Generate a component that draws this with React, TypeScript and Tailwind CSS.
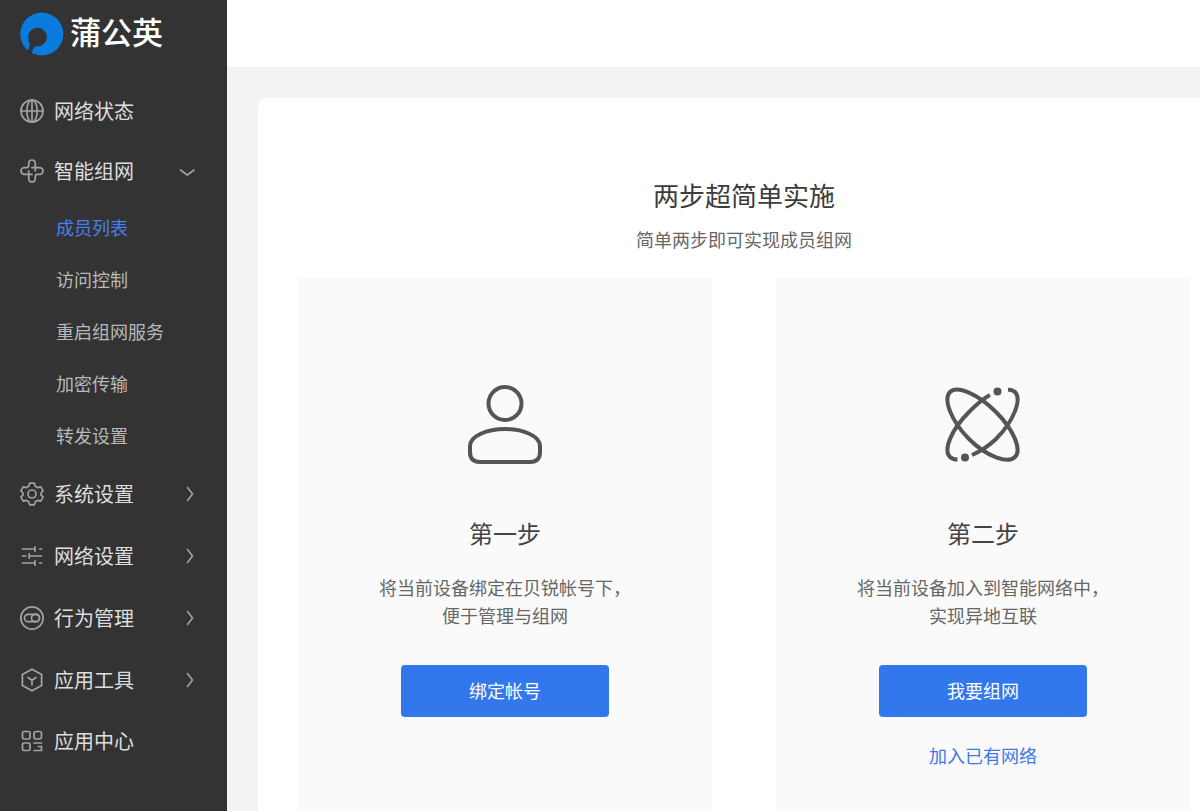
import type { ReactNode } from "react";

type IconProps = { children: ReactNode };

function MenuGlyph({ children }: IconProps) {
  return (
    <svg
      viewBox="0 0 24 24"
      className="size-6 shrink-0 text-[#a3a3a3]"
      fill="none"
      stroke="currentColor"
      strokeWidth="1.7"
      strokeLinecap="round"
      strokeLinejoin="round"
      aria-hidden="true"
    >
      {children}
    </svg>
  );
}

const globe = (
  <MenuGlyph>
    <circle cx="12" cy="12" r="11" />
    <ellipse cx="12" cy="12" rx="5.2" ry="11" />
    <path d="M1 12h22M12 1v22" />
  </MenuGlyph>
);

const mesh = (
  <MenuGlyph>
    <path d="M15.300 12V4.300a3.300 3.300 0 0 0-6.600 0V6.500q0 2.200-2.200 2.200H4.300a3.300 3.300 0 0 0 0 6.600H12" />
    <path d="M8.700 12v7.700a3.300 3.300 0 0 0 6.600 0V17.500q0-2.200 2.200-2.200h2.200a3.300 3.300 0 0 0 0-6.600H12" />
  </MenuGlyph>
);

const gear = (
  <MenuGlyph>
    <path d="M9.700 1.200h4.600l1 3.100 2.300 1.300 3.200-.7 2.300 4-2.200 2.400v1.400l2.200 2.400-2.300 4-3.200-.7-2.300 1.300-1 3.100H9.700l-1-3.100-2.300-1.300-3.200.7-2.300-4 2.200-2.400v-1.400L.9 8.900l2.300-4 3.200.7 2.300-1.300z" />
    <circle cx="12" cy="12" r="4" />
  </MenuGlyph>
);

const sliders = (
  <MenuGlyph>
    <path d="M2.500 5h12M15 2.800v4.400M19.800 5h1.700M2.500 12h3.200M9.500 12h12M9.200 9.800v4.400M2.500 19h12M15 16.800v4.400M19.800 19h1.700" />
  </MenuGlyph>
);

const toggle = (
  <MenuGlyph>
    <circle cx="12" cy="12" r="11.200" />
    <rect x="4.500" y="8.300" width="15" height="7.400" rx="3.700" />
    <rect x="11.500" y="8.300" width="8" height="7.400" rx="3.700" />
  </MenuGlyph>
);

const cube = (
  <MenuGlyph>
    <path d="M12 1.200l9.600 5.400v10.800L12 22.800l-9.600-5.400V6.600z" />
    <path d="M8 9.500l4 2.800 4-2.800M12 12.300v4.500" />
  </MenuGlyph>
);

const grid = (
  <MenuGlyph>
    <rect x="2.500" y="2.500" width="7.500" height="7.500" rx="1.500" />
    <rect x="14" y="2.500" width="7.500" height="7.500" rx="2.200" />
    <rect x="2.500" y="14" width="7.500" height="7.500" rx="1.500" />
    <path d="M14 14h7.500M18.500 17.500h3M14 21.500h7.500M21.500 17.500v4" />
  </MenuGlyph>
);

function Chevron({ open }: { open?: boolean }) {
  return (
    <svg
      viewBox="0 0 16 16"
      className="ml-auto size-4 shrink-0 text-[#a3a3a3]"
      fill="none"
      stroke="currentColor"
      strokeWidth="1.6"
      strokeLinecap="round"
      strokeLinejoin="round"
      aria-hidden="true"
    >
      {open ? <path d="M1.500 7l6.800 5 6.800-5" /> : <path d="M8.500 1.500l5 6.500-5 6.500" />}
    </svg>
  );
}

type MenuItemProps = {
  icon: ReactNode;
  label: string;
  expandable?: boolean;
  open?: boolean;
};

function MenuItem({ icon, label, expandable, open }: MenuItemProps) {
  const content = (
    <>
      {icon}
      <span>{label}</span>
    </>
  );
  if (!expandable) {
    return (
      <a href="#" className="flex h-15 items-center gap-2.5 pl-5 text-xl text-[#dedede]">
        {content}
      </a>
    );
  }
  return (
    <button
      type="button"
      aria-expanded={!!open}
      className={
        open
          ? "flex h-15 w-full items-center gap-2.5 pr-8 pl-5 text-xl text-[#dedede]"
          : "flex h-[62px] w-full items-center gap-2.5 pr-8 pl-5 text-xl text-[#dedede]"
      }
    >
      {content}
      <Chevron open={open} />
    </button>
  );
}

const subItems = ["成员列表", "访问控制", "重启组网服务", "加密传输", "转发设置"];

function Sidebar() {
  return (
    <aside className="w-[227px] shrink-0 bg-[#333333]">
      <div className="flex h-[67px] items-center gap-1.5 pl-5">
        <svg viewBox="0 0 44 44" className="size-11 shrink-0" aria-hidden="true">
          <circle cx="21.800" cy="22" r="21.500" fill="#087bdc" />
          <circle cx="17.500" cy="25" r="9.300" fill="#333333" />
          <path d="M8.500 28q2 4.500.8 8L6 40l5 4 1.500-5.500q1-3.500 4-5z" fill="#333333" />
        </svg>
        <span className="pb-1.5 text-[31px] leading-10 font-medium text-white">蒲公英</span>
      </div>
      <nav className="pt-3.5">
        <MenuItem icon={globe} label="网络状态" />
        <MenuItem icon={mesh} label="智能组网" expandable open />
        <ul className="pb-0.5">
          {subItems.map((label, i) => (
            <li key={label}>
              <a
                href="#"
                className={
                  i === 0
                    ? "flex h-13 items-center pl-14 text-lg text-[#4a7fee]"
                    : "flex h-13 items-center pl-14 text-lg text-[#b8b8b8]"
                }
              >
                {label}
              </a>
            </li>
          ))}
        </ul>
        <MenuItem icon={gear} label="系统设置" expandable />
        <MenuItem icon={sliders} label="网络设置" expandable />
        <MenuItem icon={toggle} label="行为管理" expandable />
        <MenuItem icon={cube} label="应用工具" expandable />
        <MenuItem icon={grid} label="应用中心" />
      </nav>
    </aside>
  );
}

const userArt = (
  <svg
    viewBox="0 0 80 80"
    className="size-20"
    fill="none"
    stroke="#555555"
    strokeWidth="4"
    aria-hidden="true"
  >
    <circle cx="40" cy="18.500" r="16.500" />
    <path d="M5 61C5 51 22 44 40 44s35 7 35 17V67q0 10-10 10H15Q5 77 5 67z" />
  </svg>
);

const atomArt = (
  <svg
    viewBox="0 0 80 80"
    className="size-20"
    fill="none"
    stroke="#555555"
    strokeWidth="4"
    aria-hidden="true"
  >
    <path d="M7 7C14 0 35 9 53 27s26 38 19 45-28 0-46-18S0 14 7 7z" />
    <path d="M47 10C40 13.500 32.500 20.500 26 27 8 45 0 65 7 72c1.800 1.800 4.200 2.500 7.500 2.500" />
    <path d="M29 70c7-3 16-8.500 24-16 18-18 26-40 19-47-1.700-1.700-4-2.500-7-2.300" />
    <circle cx="54.500" cy="6.500" r="4" fill="#555555" stroke="none" />
    <circle cx="22" cy="72.500" r="4" fill="#555555" stroke="none" />
  </svg>
);

type StepProps = {
  art: ReactNode;
  title: string;
  lines: [string, string];
  action: string;
  link?: string;
};

function Step({ art, title, lines, action, link }: StepProps) {
  return (
    <section className="flex flex-1 flex-col items-center bg-[#fafafa] pt-[107px] pb-8">
      {art}
      <h2 className="mt-13 text-2xl leading-8 text-[#444444]">{title}</h2>
      <p className="mt-6 text-center text-lg leading-7 text-[#666666]">
        {lines[0]}
        <br />
        {lines[1]}
      </p>
      <button
        type="button"
        className="mt-9 h-13 w-52 rounded-sm bg-[#3377ec] pb-0.5 text-lg text-white"
      >
        {action}
      </button>
      {link && (
        <a href="#" className="mt-6 text-lg leading-7 text-[#3f78e8]">
          {link}
        </a>
      )}
    </section>
  );
}

export default function App() {
  return (
    <div className="flex min-h-screen bg-[#f3f3f3] font-['Noto_Sans_CJK_SC',sans-serif]">
      <Sidebar />
      <div className="flex min-w-0 flex-1 flex-col">
        <header className="h-[67px] shrink-0 bg-white" />
        <main className="mt-[31px] ml-[31px] flex flex-1 flex-col rounded-tl-lg bg-white pt-[79px] pr-2.5 pl-10">
          <h1 className="text-center text-[26px] leading-9 text-[#3c3c3c]">两步超简单实施</h1>
          <p className="mt-3 text-center text-lg leading-7 text-[#666666]">
            简单两步即可实现成员组网
          </p>
          <div className="mt-[25px] flex flex-1 gap-16">
            <Step
              art={userArt}
              title="第一步"
              lines={["将当前设备绑定在贝锐帐号下，", "便于管理与组网"]}
              action="绑定帐号"
            />
            <Step
              art={atomArt}
              title="第二步"
              lines={["将当前设备加入到智能网络中，", "实现异地互联"]}
              action="我要组网"
              link="加入已有网络"
            />
          </div>
        </main>
      </div>
    </div>
  );
}
